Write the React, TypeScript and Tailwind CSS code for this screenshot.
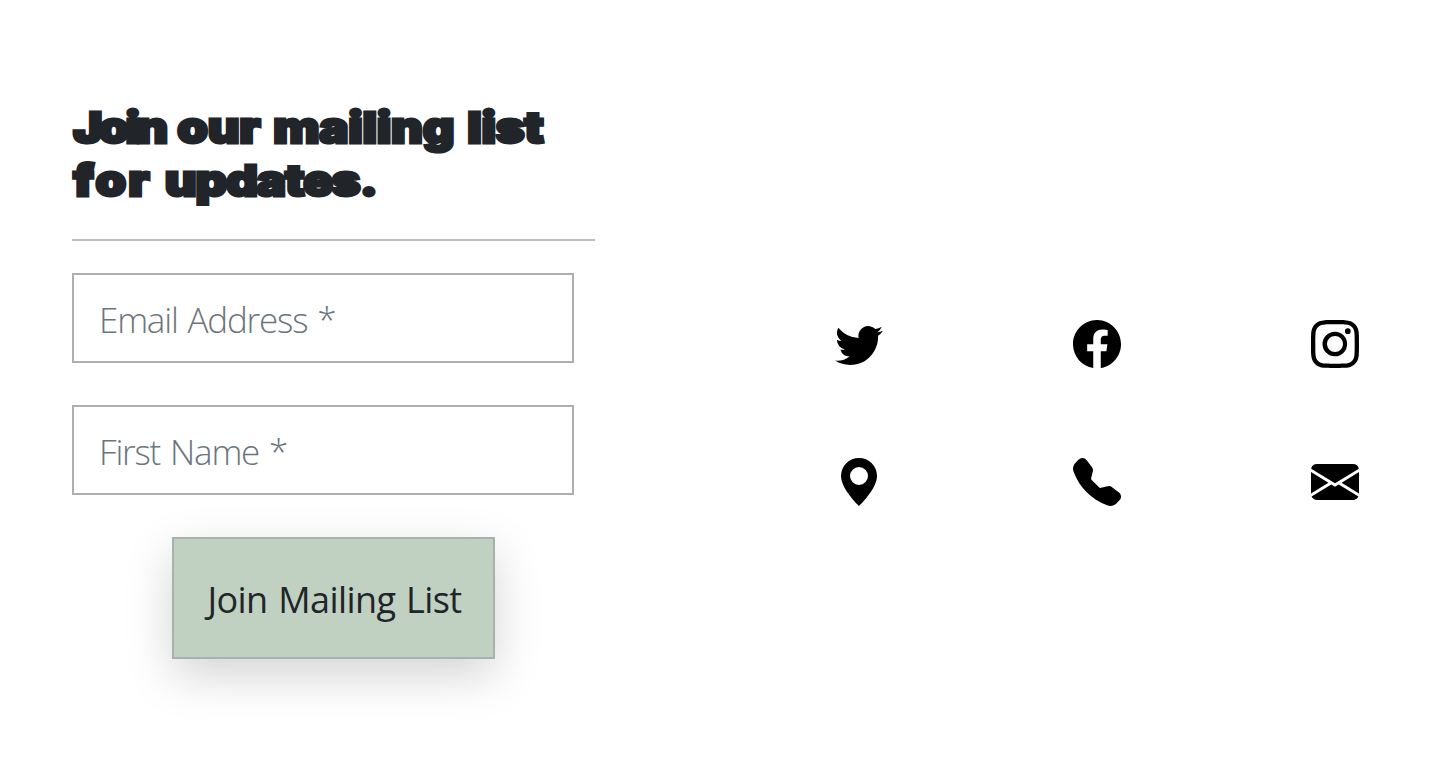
import { BsTwitter, BsFacebook, BsInstagram, BsGeoAltFill, BsTelephoneFill, BsEnvelopeFill } from "react-icons/bs";

const icons = [
  { label: "Twitter", Icon: BsTwitter },
  { label: "Facebook", Icon: BsFacebook },
  { label: "Instagram", Icon: BsInstagram },
  { label: "Location", Icon: BsGeoAltFill },
  { label: "Phone", Icon: BsTelephoneFill },
  { label: "Email", Icon: BsEnvelopeFill },
];

const field =
  "block h-[90px] w-[502px] border-2 border-[#abafae] bg-white pt-0.5 pl-[25px] font-['Open_Sans',sans-serif] text-[35px] font-light tracking-[-1.2px] text-[#212529] outline-none [word-spacing:2px] placeholder:text-[#6c757d]";

export default function App() {
  return (
    <main className="flex h-[766px] w-[1439px] overflow-hidden bg-white">
      <section className="w-[595px] shrink-0 pt-[101px] pl-[72px]">
        <h2 className="origin-left scale-x-[1.14] font-['Inter',sans-serif] text-[43px] leading-[53px] font-black tracking-[-0.2px] whitespace-nowrap text-[#212529] [-webkit-text-stroke:3px_#212529] [word-spacing:3px]">
          <span className="block pl-px">
            <span className="tracking-[-3.3px]">Join</span> our mailing list
          </span>
          <span className="block pl-px">
            <span className="tracking-[2px]">for</span> <span className="tracking-[-0.9px]">updates.</span>
          </span>
        </h2>
        <hr className="mt-8 h-0.5 border-0 bg-[#bfbfbf]" />
        <form className="mt-8" onSubmit={(e) => e.preventDefault()}>
          <input className={field} placeholder="Email Address *" />
          <input className={`${field} mt-[42px]`} placeholder="First Name *" />
          <button className="mt-[42px] ml-[100px] flex h-[122px] w-[323px] items-center justify-center border-2 border-[#a9b1af] bg-[#c0d0c1] pt-1 pl-0.5 font-['Open_Sans',sans-serif] text-[36px] tracking-[-0.6px] whitespace-nowrap text-[#212529] shadow-[0_16px_48px_rgba(0,0,0,0.176)] [word-spacing:2px]">
            Join Mailing List
          </button>
        </form>
      </section>
      <nav className="mt-[320px] ml-[239.5px] grid h-[186px] w-[524.5px] grid-cols-[48px_48px_48px] content-between justify-between">
        {icons.map(({ label, Icon }) => (
          <a key={label} href="#" aria-label={label} className="block text-black">
            <Icon className="size-12" />
          </a>
        ))}
      </nav>
    </main>
  );
}
